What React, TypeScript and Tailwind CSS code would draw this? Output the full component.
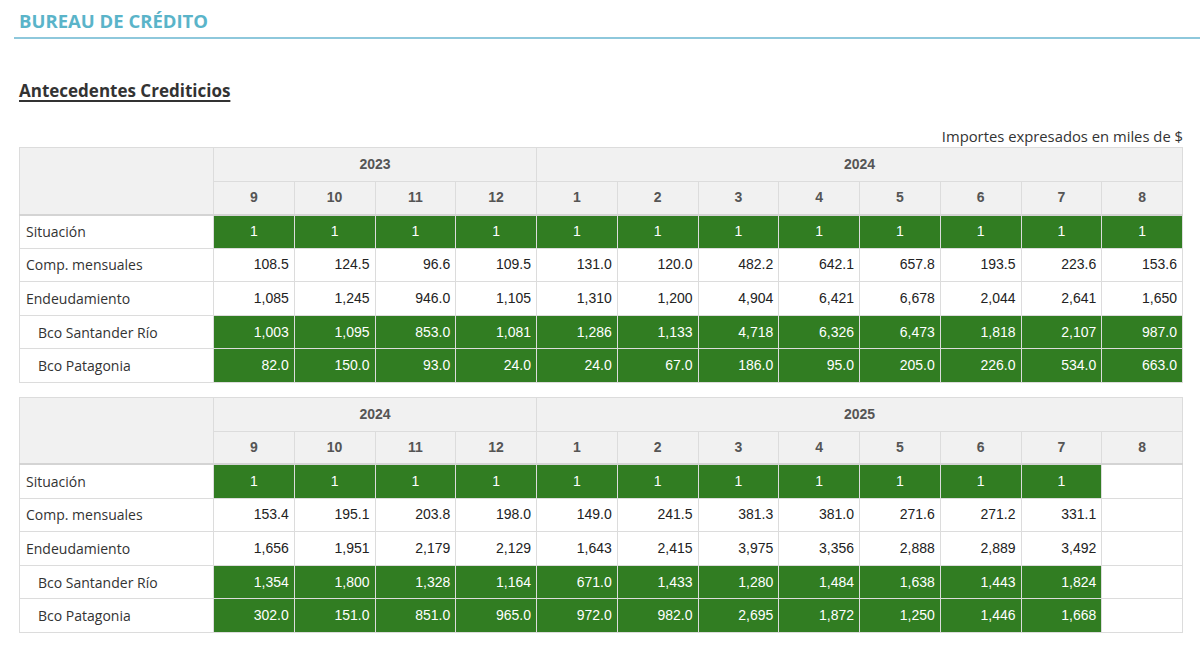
import React from "react";

type Row = { label: string; indent?: boolean; green?: boolean; values: (string | null)[] };

const t1Rows: Row[] = [
  { label: "Situación", green: true, values: Array(12).fill("1") },
  { label: "Comp. mensuales", values: ["108.5", "124.5", "96.6", "109.5", "131.0", "120.0", "482.2", "642.1", "657.8", "193.5", "223.6", "153.6"] },
  { label: "Endeudamiento", values: ["1,085", "1,245", "946.0", "1,105", "1,310", "1,200", "4,904", "6,421", "6,678", "2,044", "2,641", "1,650"] },
  { label: "Bco Santander Río", indent: true, green: true, values: ["1,003", "1,095", "853.0", "1,081", "1,286", "1,133", "4,718", "6,326", "6,473", "1,818", "2,107", "987.0"] },
  { label: "Bco Patagonia", indent: true, green: true, values: ["82.0", "150.0", "93.0", "24.0", "24.0", "67.0", "186.0", "95.0", "205.0", "226.0", "534.0", "663.0"] },
];

const t2Rows: Row[] = [
  { label: "Situación", green: true, values: [...Array(11).fill("1"), null] },
  { label: "Comp. mensuales", values: ["153.4", "195.1", "203.8", "198.0", "149.0", "241.5", "381.3", "381.0", "271.6", "271.2", "331.1", null] },
  { label: "Endeudamiento", values: ["1,656", "1,951", "2,179", "2,129", "1,643", "2,415", "3,975", "3,356", "2,888", "2,889", "3,492", null] },
  { label: "Bco Santander Río", indent: true, green: true, values: ["1,354", "1,800", "1,328", "1,164", "671.0", "1,433", "1,280", "1,484", "1,638", "1,443", "1,824", null] },
  { label: "Bco Patagonia", indent: true, green: true, values: ["302.0", "151.0", "851.0", "965.0", "972.0", "982.0", "2,695", "1,872", "1,250", "1,446", "1,668", null] },
];

const months = ["9", "10", "11", "12", "1", "2", "3", "4", "5", "6", "7", "8"];

function DataTable({ y1, y2, rows }: { y1: string; y2: string; rows: Row[] }) {
  return (
    <table className="w-[1164px] table-fixed border-collapse border border-[#dcdcdc]">
      <colgroup>
        <col className="w-[194px]" />
        {months.map((_, i) => (
          <col key={i} />
        ))}
      </colgroup>
      <thead>
        <tr className="h-[34px] bg-[#f1f1f1]">
          <th rowSpan={2} className="border border-[#dcdcdc] border-b-2 border-b-[#d4d4d4]"></th>
          <th colSpan={4} className="border border-[#dcdcdc] text-center text-[14px] font-bold text-[#555] font-['Liberation_Sans',Arial,sans-serif]">
            {y1}
          </th>
          <th colSpan={8} className="border border-[#dcdcdc] text-center text-[14px] font-bold text-[#555] font-['Liberation_Sans',Arial,sans-serif]">
            {y2}
          </th>
        </tr>
        <tr className="h-[33px] bg-[#f1f1f1]">
          {months.map((m, i) => (
            <th
              key={i}
              className="border border-[#dcdcdc] border-b-2 border-b-[#d4d4d4] text-center text-[14px] font-bold text-[#555] font-['Liberation_Sans',Arial,sans-serif]"
            >
              {m}
            </th>
          ))}
        </tr>
      </thead>
      <tbody>
        {rows.map((r, ri) => (
          <tr key={ri} className="h-[33.6px]">
            <td
              className={`border border-[#dcdcdc] text-[14px] text-[#333] font-['Open_Sans',sans-serif] ${r.indent ? "pl-[18px]" : "pl-[6px]"}`}
            >
              {r.label}
            </td>
            {r.values.map((v, vi) =>
              v === null ? (
                <td key={vi} className="border border-[#dcdcdc] bg-white"></td>
              ) : r.green ? (
                <td
                  key={vi}
                  className={`border border-[#dcdcdc] bg-[#317d22] text-white text-[14px] font-['Liberation_Sans',Arial,sans-serif] ${
                    ri === 0 ? "text-center" : "text-right pr-[5px]"
                  }`}
                >
                  {v}
                </td>
              ) : (
                <td
                  key={vi}
                  className="border border-[#dcdcdc] text-right pr-[5px] text-[14px] text-[#222] font-['Liberation_Sans',Arial,sans-serif]"
                >
                  {v}
                </td>
              )
            )}
          </tr>
        ))}
      </tbody>
    </table>
  );
}

export default function App() {
  return (
    <div className="w-[1200px] h-[653px] bg-white overflow-hidden font-['Open_Sans',sans-serif]">
      <div className="pl-[14px]">
        <div className="border-b-[2px] border-[#8ec8dc] pl-[5px] pt-[8px] h-[39px]">
          <h1 className="text-[18.5px] leading-[26px] font-bold text-[#5ab4c9]">BUREAU DE CRÉDITO</h1>
        </div>
      </div>
      <div className="pl-[19px] pr-[17px]">
        <h2 className="mt-[40px] text-[17px] leading-[24px] font-bold text-[#333] underline underline-offset-[3px] decoration-[1.5px]">
          Antecedentes Crediticios
        </h2>
        <div className="mt-[23px] text-right text-[14.8px] leading-[21px] text-[#333]">Importes expresados en miles de $</div>
        <DataTable y1="2023" y2="2024" rows={t1Rows} />
        <div className="h-[14px]" />
        <DataTable y1="2024" y2="2025" rows={t2Rows} />
      </div>
    </div>
  );
}
